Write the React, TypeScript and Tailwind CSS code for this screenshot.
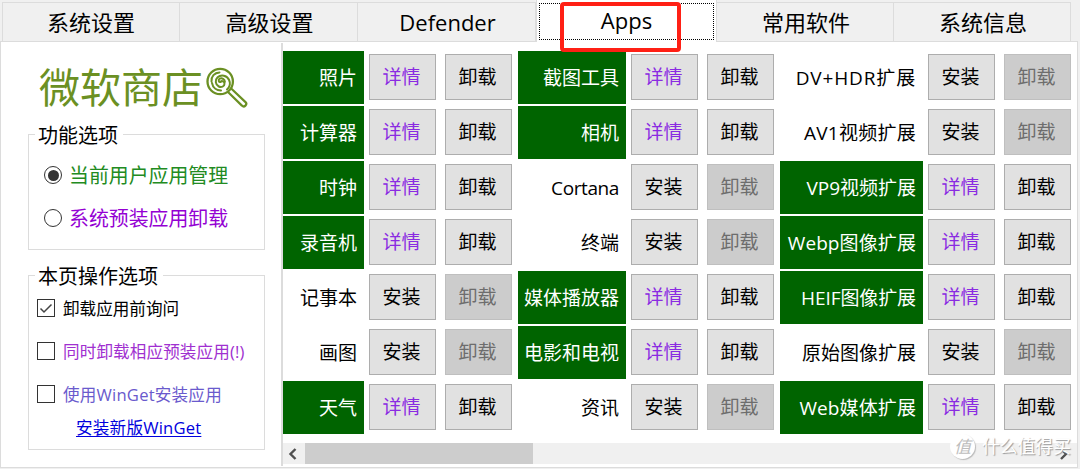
import { useState } from 'react'
import clsx from 'clsx'

interface AppItem {
  name: string
  installed: boolean
  tracking?: string
}

const TABS = [
  { label: '系统设置', width: 'w-[178px]' },
  { label: '高级设置', width: 'w-[178px]' },
  { label: 'Defender', width: 'w-[178px]' },
  { label: 'Apps',     width: 'w-[181px]' },
  { label: '常用软件', width: 'w-[177px]' },
  { label: '系统信息', width: 'w-[177px]' },
]

const COLUMNS: { labelWidth: string; items: AppItem[] }[] = [
  {
    labelWidth: 'w-[81px]',
    items: [
      { name: '照片',   installed: true  },
      { name: '计算器', installed: true  },
      { name: '时钟',   installed: true  },
      { name: '录音机', installed: true  },
      { name: '记事本', installed: false },
      { name: '画图',   installed: false },
      { name: '天气',   installed: true  },
    ],
  },
  {
    labelWidth: 'w-[108px]',
    items: [
      { name: '截图工具',   installed: true  },
      { name: '相机',       installed: true  },
      { name: 'Cortana',    installed: false, tracking: 'tracking-[-0.4px]' },
      { name: '终端',       installed: false },
      { name: '媒体播放器', installed: true  },
      { name: '电影和电视', installed: true  },
      { name: '资讯',       installed: false },
    ],
  },
  {
    labelWidth: 'w-[143px]',
    items: [
      { name: 'DV+HDR扩展',   installed: false, tracking: 'tracking-[0.85px]' },
      { name: 'AV1视频扩展',  installed: false, tracking: 'tracking-[0.25px]' },
      { name: 'VP9视频扩展',  installed: true  },
      { name: 'Webp图像扩展', installed: true,  tracking: 'tracking-[0.1px]' },
      { name: 'HEIF图像扩展', installed: true,  tracking: 'tracking-[-0.1px]' },
      { name: '原始图像扩展', installed: false },
      { name: 'Web媒体扩展',  installed: true,  tracking: 'tracking-[0.1px]' },
    ],
  },
]

const CHECKS = [
  { label: '卸载应用前询问',        color: 'text-black' },
  { label: '同时卸载相应预装应用(!)', color: 'text-[#a030d0] tracking-[0.1px]' },
  { label: '使用WinGet安装应用',    color: 'text-[#6a5acd] tracking-[0.2px]' },
]

function Lollipop() {
  return (
    <svg className="w-[46px] h-[44px] shrink-0" viewBox="0 0 46 44" fill="none" stroke="#6b9023" strokeLinecap="round" strokeLinejoin="round">
      <circle cx="17.2" cy="16.500" r="12.700" strokeWidth="2.300" />
      <path strokeWidth="2" d="M17.500 17c1.200-1.700 4-.7 4 1.700 0 2.800-3.300 4-5.700 2.800-3.600-1.800-4-6.600-1.200-9.200 3.500-3.200 9.300-2 11.400 2.400 1.600 3.400.6 7.300-2 9.800" />
      <path strokeWidth="2" d="M17.500 17c-1.700.3-2.700-2.300-.8-3.300 2.300-1.200 5 .6 5.200 3.200M8.500 16.500C8 11.500 11.500 7.600 16.500 7.400M9 18c.8 4.500 4.500 7.500 9 7.500" />
      <path strokeWidth="2.200" d="M25.500 27.500 38.900 40.600a2.500 2.500 0 0 0 3.600-3.500L28.700 24" />
    </svg>
  )
}

function AppButton({ label, kind }: { label: string; kind: 'normal' | 'details' | 'disabled' }) {
  return (
    <button
      disabled={kind === 'disabled'}
      className={clsx(
        'w-[67px] h-[46px] shrink-0 border pr-[2px] text-[19px] leading-[45px] whitespace-nowrap',
        kind === 'normal' && 'bg-[#e1e1e1] border-[#adadad] text-black',
        kind === 'details' && 'bg-[#e1e1e1] border-[#adadad] text-[#8a2be2]',
        kind === 'disabled' && 'bg-[#cccccc] border-[#bfbfbf] text-[#6d6d6d]',
      )}
    >
      {label}
    </button>
  )
}

function AppRow({ item, labelWidth }: { item: AppItem; labelWidth: string }) {
  return (
    <div className="flex h-[53px] items-start">
      <div
        className={clsx(
          labelWidth,
          'h-[53px] shrink-0 pr-[7px] text-right text-[19px] leading-[54px] whitespace-nowrap',
          item.installed ? 'bg-[#006400] text-white' : 'text-black',
          item.tracking,
        )}
      >
        {item.name}
      </div>
      <div className="ml-[5px] mt-[3px] flex gap-[9px]">
        <AppButton label={item.installed ? '详情' : '安装'} kind={item.installed ? 'details' : 'normal'} />
        <AppButton label="卸载" kind={item.installed ? 'normal' : 'disabled'} />
      </div>
    </div>
  )
}

export default function App() {
  const [tab, setTab] = useState('Apps')
  const [scope, setScope] = useState(0)
  const [checked, setChecked] = useState([true, false, false])

  return (
    <div className="relative flex h-[469px] w-[1080px] flex-col overflow-hidden bg-[#f0f0f0] font-['Open_Sans','Noto_Sans_CJK_SC',sans-serif] text-black">
      {/* Tab strip */}
      <div className="flex h-[42px] shrink-0 pl-[2px]">
        {TABS.map(t => (
          <button
            key={t.label}
            onClick={() => setTab(t.label)}
            className={clsx(
              t.width,
              'shrink-0 text-[22px] whitespace-nowrap',
              t.label === tab
                ? 'z-10 border-x border-[#dcdcdc] bg-white p-[2px]'
                : 'mt-[2px] h-[40px] border-y border-r border-[#dcdcdc] pl-[2px] leading-[38px] first:border-l first:pl-0',
            )}
          >
            {t.label === tab
              ? <span className="block h-[37px] border border-dotted border-black leading-[33px]">{t.label}</span>
              : t.label}
          </button>
        ))}
      </div>

      {/* Page */}
      <div className="-mt-[1px] flex h-[427px] w-[1078px] shrink-0 border border-[#dcdcdc] bg-white">
        <div className="flex w-[280px] shrink-0 flex-col pl-[27px]">
          <div className="mt-[23px] flex h-[44px] items-center pl-[11px] text-[#6b9023]">
            <span className="text-[41px] leading-[44px] whitespace-nowrap">微软商店</span>
            <Lollipop />
          </div>

          <fieldset className="mt-[15px] h-[126px] w-[237px]">
            <div className="relative mt-[10px] h-[116px] border border-[#dcdcdc]">
              <span className="absolute -top-[14px] left-[6px] bg-white pl-[3px] pr-[5px] text-[20px] leading-[30px]">功能选项</span>
              <div className="flex flex-col gap-[13px] pl-[15px] pt-[25px]">
                {['当前用户应用管理', '系统预装应用卸载'].map((label, i) => (
                  <label key={label} className="flex h-[30px] items-center gap-[7px]" onClick={() => setScope(i)}>
                    <span className="flex size-[18px] items-center justify-center rounded-full border border-[#333333]">
                      {scope === i && <span className="size-[11px] rounded-full bg-[#333333]" />}
                    </span>
                    <span className={clsx('pt-[2px] text-[19.9px] leading-[30px] whitespace-nowrap', i === 0 ? 'text-[#228b22]' : 'text-[#9400d3]')}>
                      {label}
                    </span>
                  </label>
                ))}
              </div>
            </div>
          </fieldset>

          <fieldset className="mt-[15px] h-[185px] w-[237px]">
            <div className="relative mt-[10px] h-[175px] border border-[#dcdcdc]">
              <span className="absolute -top-[14px] left-[6px] bg-white pl-[3px] pr-[5px] text-[20px] leading-[30px]">本页操作选项</span>
              <div className="flex flex-col gap-[19px] pl-[8px] pt-[20px]">
                {CHECKS.map((c, i) => (
                  <label
                    key={c.label}
                    className="flex h-[24px] items-center gap-[8px]"
                    onClick={() => setChecked(prev => prev.map((v, j) => (j === i ? !v : v)))}
                  >
                    <span className="size-[18px] shrink-0 border border-[#333333]">
                      {checked[i] && (
                        <svg className="size-4" viewBox="0 0 16 16" fill="none" stroke="#444" strokeWidth="1.500">
                          <path d="M2.500 8.500 6 12 13.500 4.500" />
                        </svg>
                      )}
                    </span>
                    <span className={clsx('pt-[2px] text-[16.6px] leading-[24px] whitespace-nowrap', c.color)}>{c.label}</span>
                  </label>
                ))}
              </div>
              <a className="ml-[47px] mt-[10px] block text-[16.6px] leading-[24px] tracking-[0.2px] text-[#0000dd] underline underline-offset-2 whitespace-nowrap">
                安装新版WinGet
              </a>
            </div>
          </fieldset>
        </div>

        {/* App grid */}
        <div className="mt-[1px] flex h-[423px] w-[796px] shrink-0 flex-col border-l-2 border-[#dcdcdc]">
          <div className="flex h-[400px] shrink-0 gap-[6px] pt-[8px]">
            {COLUMNS.map(col => (
              <div key={col.labelWidth} className="flex flex-col gap-[2px]">
                {col.items.map(item => <AppRow key={item.name} item={item} labelWidth={col.labelWidth} />)}
              </div>
            ))}
          </div>
          <div className="flex h-[21px] items-center bg-[#f0f0f0]">
            <svg className="h-5 w-[22px]" viewBox="0 0 22 20" fill="none" stroke="#505050" strokeWidth="2.400">
              <path d="M12.500 5 7.500 10l5 5" />
            </svg>
            <div className="h-[21px] w-[228px] bg-[#cdcdcd]" />
            <svg className="ml-auto h-5 w-[22px]" viewBox="0 0 22 20" fill="none" stroke="#505050" strokeWidth="2.400">
              <path d="M6 5l5 5-5 5" />
            </svg>
          </div>
        </div>
      </div>

      {/* Highlight frame around the active tab */}
      <div className="absolute left-[560px] top-[2px] z-20 h-[50px] w-[121px] rounded-[4px] border-4 border-[#ff2015]" />

      {/* Watermark */}
      <div className="absolute left-[950px] top-[434px] z-20 flex items-center gap-[7px]">
        <span className="flex size-[25px] items-center justify-center rounded-full bg-white text-[17px] italic leading-none text-[#bdbdbd] shadow-[1px_1px_1px_#bbbbbb]">值</span>
        <span className="text-[17.8px] leading-[25px] text-white whitespace-nowrap [text-shadow:1px_1px_1px_#999999]">什么值得买</span>
      </div>
    </div>
  )
}
